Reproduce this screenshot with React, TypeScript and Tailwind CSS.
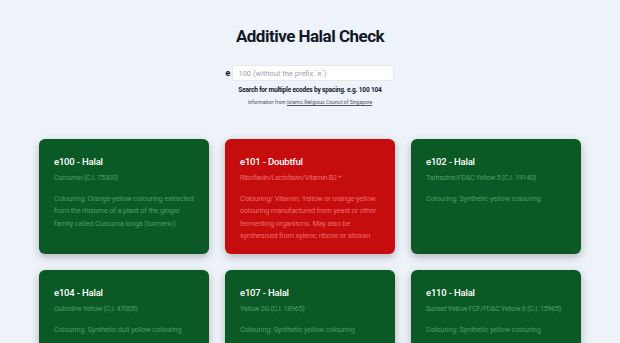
const additives = [
  {
    code: "e100",
    status: "Halal",
    name: "Curcumin (C.I. 75300)",
    desc: "Colouring: Orange-yellow colouring extracted from the rhizome of a plant of the ginger family called Curcuma longa (turmeric)",
  },
  {
    code: "e101",
    status: "Doubtful",
    name: "Riboflavin/Lactofavin/Vitamin B2 *",
    desc: "Colouring/ Vitamin: Yellow or orange-yellow colouring manufactured from yeast or other fermenting organisms. May also be synthesised from xylene, ribose or alloxan",
  },
  {
    code: "e102",
    status: "Halal",
    name: "Tartrazine/FD&C Yellow 5 (C.I. 19140)",
    desc: "Colouring: Synthetic yellow colouring",
  },
  {
    code: "e104",
    status: "Halal",
    name: "Quinoline Yellow (C.I. 47005)",
    desc: "Colouring: Synthetic dull yellow colouring",
  },
  {
    code: "e107",
    status: "Halal",
    name: "Yellow 2G (C.I. 18965)",
    desc: "Colouring: Synthetic yellow colouring",
  },
  {
    code: "e110",
    status: "Halal",
    name: "Sunset Yellow FCF/FD&C Yellow 6 (C.I. 15985)",
    desc: "Colouring: Synthetic yellow colouring",
  },
];

function Card({ item }: { item: (typeof additives)[number] }) {
  const halal = item.status === "Halal";
  const sub = halal ? "text-[#4e9a60]" : "text-[#ec6a6a]";
  return (
    <div
      className={`h-[115px] rounded-md px-[15px] pt-[17px] shadow-[0_3px_8px_rgba(0,0,0,0.25)] ${
        halal ? "bg-[#0b5a26]" : "bg-[#c60d0d]"
      }`}
    >
      <h2 className="text-[9.5px] font-medium leading-[12px] tracking-[-0.02em] text-white">
        {item.code} - {item.status}
      </h2>
      <p className={`mt-[5px] whitespace-nowrap text-[7.2px] leading-[10px] tracking-[-0.04em] ${sub}`}>
        {item.name}
      </p>
      <p className={`mt-[10px] text-[7.35px] leading-[12.3px] tracking-[-0.02em] ${sub}`}>
        {item.desc}
      </p>
    </div>
  );
}

export default function App() {
  return (
    <div className="min-h-[343px] bg-[#eef2f9] font-['Roboto',sans-serif] text-[#111827]">
      <header className="flex flex-col items-center pt-[24px]">
        <h1 className="text-[17px] font-bold leading-[24px] tracking-[-0.03em]">
          Additive Halal Check
        </h1>
        <div className="mt-[17px] flex items-center gap-[2px]">
          <span className="text-[9px] font-bold leading-none">e</span>
          <input
            className="h-[16px] w-[162px] rounded-[3px] border border-[#e5e7eb] bg-white px-[5px] text-[7.5px] text-[#374151] placeholder:text-[#9ca3af] outline-none"
            placeholder="100 (without the prefix `e`)"
          />
        </div>
        <p className="mt-[4px] text-[6.5px] font-bold leading-[10px] tracking-tight">
          Search for multiple ecodes by spacing. e.g. 100 104
        </p>
        <p className="mt-[3px] text-[5px] leading-[8px] text-[#4b5563]">
          Information from{" "}
          <a href="#" className="underline">
            Islamic Religious Council of Singapore
          </a>
        </p>
      </header>
      <main className="mx-auto mt-[33px] grid w-[542px] grid-cols-3 gap-[16px]">
        {additives.map((a) => (
          <Card key={a.code} item={a} />
        ))}
      </main>
    </div>
  );
}
